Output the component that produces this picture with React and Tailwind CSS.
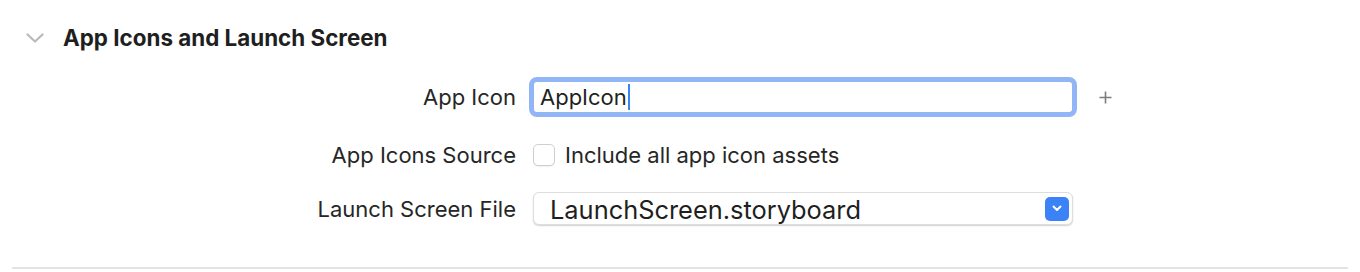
import React from "react";

function Chevron({ className }) {
  return (
    <svg className={className} width="18" height="10" viewBox="0 0 18 10" fill="none">
      <path d="M1.5 1.5L9 8.5L16.5 1.5" stroke="currentColor" strokeWidth="2.2" strokeLinecap="round" strokeLinejoin="round" />
    </svg>
  );
}

function Row({ label, children, className }) {
  return (
    <div className={`grid grid-cols-[516px_1fr] items-center gap-x-[17px] ${className}`}>
      <div className="text-right text-[22px] leading-none text-[#262626]">{label}</div>
      <div className="flex items-center">{children}</div>
    </div>
  );
}

export default function App() {
  return (
    <div className="w-[1360px] h-[272px] bg-white font-['Inter',sans-serif] overflow-hidden">
      <div className="h-[76px] flex items-center pl-[26px]">
        <Chevron className="text-[#b9b9b9]" />
        <h2 className="ml-[19px] text-[22.4px] font-bold leading-none text-[#1f1f1f]">
          App Icons and Launch Screen
        </h2>
      </div>

      <Row label="App Icon" className="mt-[1px] h-[40px]">
        <div className="-ml-[4px] w-[548px] h-[40px] rounded-[8px] border-[5px] border-[#92b5f5] bg-white flex items-center pl-[6px]">
          <span className="text-[22px] leading-none text-[#1f1f1f]">AppIcon</span>
          <span className="ml-[1px] w-[2px] h-[26px] bg-[#3b82f6]"></span>
        </div>
        <svg className="ml-[22px] text-[#7d7d7d]" width="13" height="13" viewBox="0 0 13 13">
          <path d="M6.5 0.5V12.5M0.5 6.5H12.5" stroke="currentColor" strokeWidth="1.6" />
        </svg>
      </Row>

      <Row label="App Icons Source" className="mt-[26px] h-[24px]">
        <div className="w-[22px] h-[22px] rounded-[5px] border border-[#cfcfcf] bg-white shadow-[0_1px_1px_rgba(0,0,0,0.06)]"></div>
        <span className="ml-[10px] text-[22px] leading-none text-[#262626]">Include all app icon assets</span>
      </Row>

      <Row label="Launch Screen File" className="mt-[25px] h-[33px]">
        <div className="w-[540px] h-[33px] rounded-[6px] border border-[#dedede] bg-white shadow-[0_1px_1.5px_rgba(0,0,0,0.18)] flex items-center justify-between pl-[16px] pr-[3px]">
          <span className="mt-[3px] text-[25.4px] leading-none text-[#1f1f1f]">LaunchScreen.storyboard</span>
          <div className="w-[24px] h-[24px] rounded-[5px] bg-[#3b82f6] flex items-center justify-center">
            <svg width="10" height="7" viewBox="0 0 10 7" fill="none">
              <path d="M1.5 1.5L5 5L8.5 1.5" stroke="white" strokeWidth="2" strokeLinecap="round" strokeLinejoin="round" />
            </svg>
          </div>
        </div>
      </Row>

      <div className="mt-[42px] mx-[12px] h-[2px] bg-[#e3e3e3]"></div>
    </div>
  );
}
